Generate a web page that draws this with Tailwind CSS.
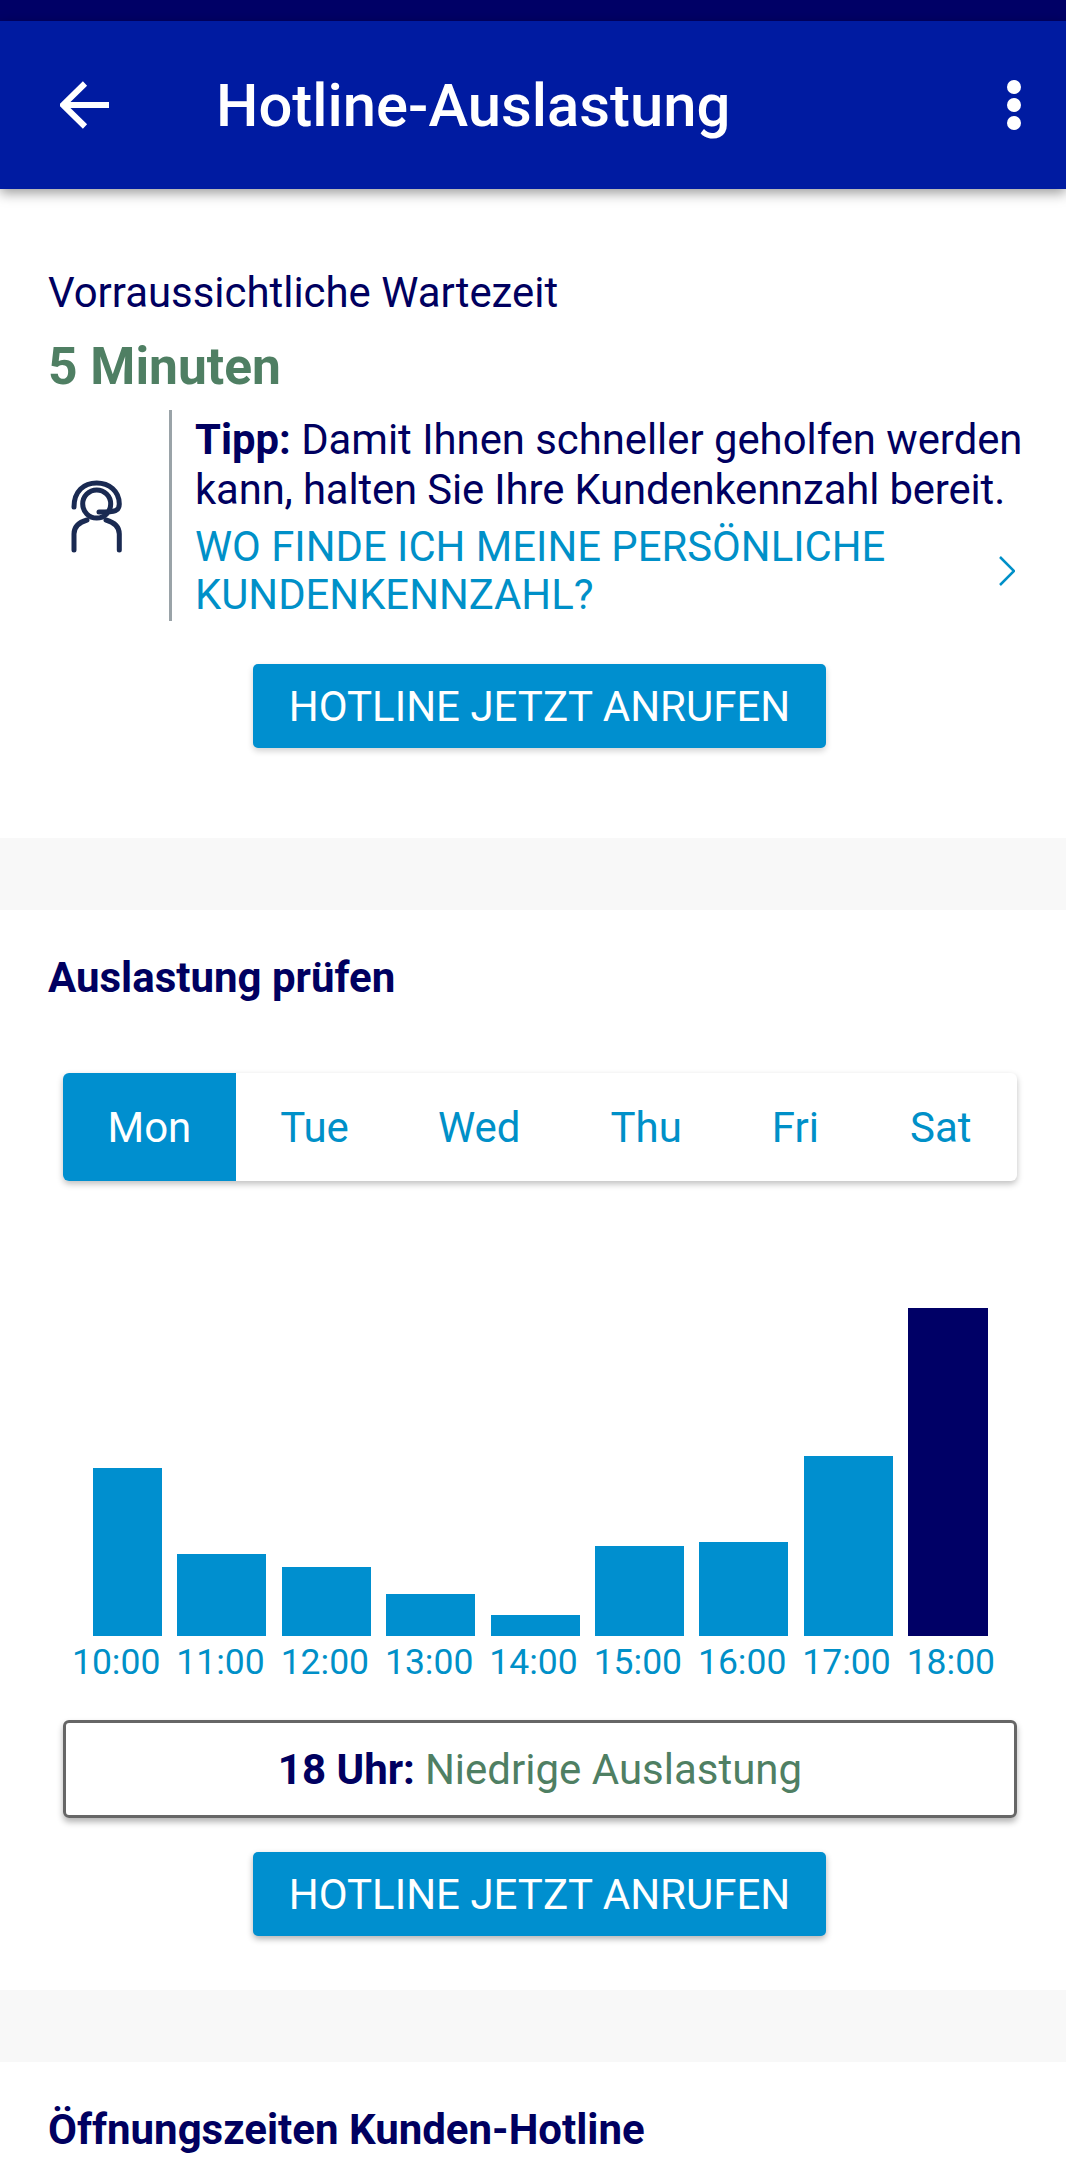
<!DOCTYPE html>
<html lang="de">
<head>
  <meta charset="UTF-8" />
  <title>Hotline-Auslastung</title>
  <script src="https://cdn.jsdelivr.net/npm/@tailwindcss/browser@4"></script>
</head>
<body class="bg-white font-['Roboto',sans-serif] text-[#000060] w-[1066px] h-[2164px] overflow-hidden">

  <!-- status bar + app bar -->
  <div class="h-[21px] bg-[#000066]"></div>
  <header class="relative z-10 flex h-[168px] items-center bg-[#001ba1] text-white shadow-[0_4px_12px_rgba(0,0,0,0.4)]">
    <svg class="ml-[60px] h-[48px] w-[50px]" viewBox="0 0 50 48" fill="none" stroke="white" stroke-width="6">
      <path d="M4 24H49M25 2.500L3 24L25 45.500" />
    </svg>
    <h1 class="ml-[106px] mt-[3px] flex-1 text-[59.800px] font-medium leading-none">Hotline-Auslastung</h1>
    <div class="mr-[45px] flex flex-col gap-[4px]">
      <span class="h-[14px] w-[14px] rounded-full bg-white"></span>
      <span class="h-[14px] w-[14px] rounded-full bg-white"></span>
      <span class="h-[14px] w-[14px] rounded-full bg-white"></span>
    </div>
  </header>

  <!-- Wartezeit -->
  <section class="h-[649px] px-[48px] pt-[79px]">
    <p class="text-[41.900px] leading-[50px]">Vorraussichtliche Wartezeit</p>
    <p class="mt-[19px] text-[51.500px] font-bold leading-[60px] text-[#4f7f63]">5 Minuten</p>
    <div class="mt-[13px] flex">
      <div class="flex w-[121px] shrink-0 items-center">
        <svg class="ml-[12px] h-[90px] w-[80px]" viewBox="0 0 80 90" fill="none" stroke="#1a2a52" stroke-width="5" stroke-linecap="round">
          <path d="M14 36C14 20 24 12 36.700 12C49 12 59.300 20 59.300 33C59.300 40 56 41 39 41" />
          <circle cx="36.700" cy="33" r="14" />
          <path d="M14 79V63C14 55 20 51 27 49M59.300 79V63C59.300 55 53 51 46 49" />
        </svg>
      </div>
      <div class="flex h-[211px] flex-1 flex-col border-l-[3px] border-[#9aa3a8] pl-[23px]">
        <p class="whitespace-nowrap pt-[5px] text-[41.800px] leading-[50px]"><b class="font-bold">Tipp:</b> Damit Ihnen schneller geholfen werden<br /><span class="tracking-[-0.12px]">kann, halten Sie Ihre Kundenkennzahl bereit.</span></p>
        <div class="mt-[8px] flex items-center text-[#0090c8]">
          <p class="flex-1 text-[41.800px] leading-[48px]">WO FINDE ICH MEINE PERSÖNLICHE<br />KUNDENKENNZAHL?</p>
          <svg class="mr-[7px] h-[30px] w-[16px]" viewBox="0 0 16 30" fill="none" stroke="#0090c8" stroke-width="2.500">
            <path d="M1 1L15 15L1 29" />
          </svg>
        </div>
      </div>
    </div>
    <button class="ml-[205px] mt-[43px] block h-[84px] w-[573px] rounded-[5px] bg-[#008fcf] text-[42px] text-white shadow-[0_3px_6px_rgba(0,0,0,0.18)]">HOTLINE JETZT ANRUFEN</button>
  </section>

  <div class="h-[72px] bg-[#f8f8f8]"></div>

  <!-- Auslastung -->
  <section class="h-[1080px]">
    <h2 class="px-[48px] pt-[45px] text-[42px] font-bold leading-[46px]">Auslastung prüfen</h2>

    <div class="ml-[63px] mt-[72px] flex h-[108px] w-[954px] items-center overflow-hidden rounded-[6px] text-[42px] text-[#0090c8] shadow-[0_3px_6px_rgba(0,0,0,0.25)]">
      <span class="flex h-full items-center bg-[#008fcf] px-[44.500px] text-white">Mon</span>
      <span class="px-[44.500px]">Tue</span>
      <span class="px-[44.500px]">Wed</span>
      <span class="ml-[1px] px-[44.500px]">Thu</span>
      <span class="ml-[1px] px-[44.500px]">Fri</span>
      <span class="ml-[2px] px-[44.500px]">Sat</span>
    </div>

    <!-- balken -->
    <div class="mt-[127px] flex h-[328px] items-end gap-[15.400px] pl-[93px]">
      <div class="h-[168px] w-[69px] bg-[#008fcf]"></div>
      <div class="h-[82px] w-[89px] bg-[#008fcf]"></div>
      <div class="h-[69px] w-[89px] bg-[#008fcf]"></div>
      <div class="h-[42px] w-[89px] bg-[#008fcf]"></div>
      <div class="h-[21px] w-[89px] bg-[#008fcf]"></div>
      <div class="h-[90px] w-[89px] bg-[#008fcf]"></div>
      <div class="h-[94px] w-[89px] bg-[#008fcf]"></div>
      <div class="h-[180px] w-[89px] bg-[#008fcf]"></div>
      <div class="h-[328px] w-[80px] bg-[#000066]"></div>
    </div>
    <div class="mt-[6px] grid grid-cols-9 pl-[64px] pr-[63px] text-center text-[35.500px] leading-[40px] text-[#0090c8]">
      <span>10:00</span><span>11:00</span><span>12:00</span><span>13:00</span><span>14:00</span><span>15:00</span><span>16:00</span><span>17:00</span><span>18:00</span>
    </div>

    <div class="ml-[63px] mt-[38px] flex h-[98px] w-[954px] items-center justify-center rounded-[6px] border-[3px] border-[#666] text-[42px] shadow-[0_4px_6px_rgba(0,0,0,0.3)]">
      <b class="font-bold">18 Uhr:</b><span class="ml-[10px] text-[#4f7f63]">Niedrige Auslastung</span>
    </div>

    <button class="ml-[253px] mt-[34px] block h-[84px] w-[573px] rounded-[5px] bg-[#008fcf] text-[42px] text-white shadow-[0_3px_6px_rgba(0,0,0,0.3)]">HOTLINE JETZT ANRUFEN</button>
  </section>

  <div class="h-[72px] bg-[#f8f8f8]"></div>

  <h2 class="px-[48px] pt-[45px] text-[42px] font-bold leading-[46px]">Öffnungszeiten Kunden-Hotline</h2>
</body>
</html>
